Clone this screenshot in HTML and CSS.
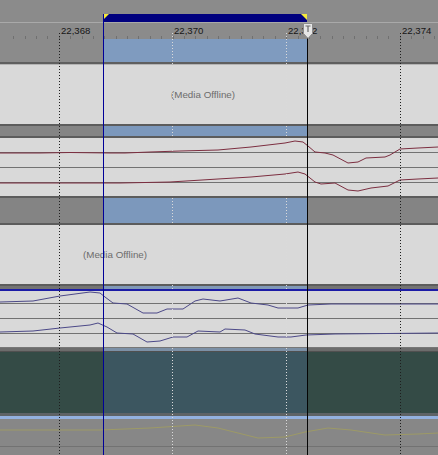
FILE: index.html
```html
<!DOCTYPE html>
<html>
<head>
<meta charset="utf-8">
<link rel="stylesheet" href="styles.css">
</head>
<body>
<div class="timeline">
  <div class="loopbar">
    <div class="loop"><span class="tri tri-l"></span><span class="tri tri-r"></span></div>
  </div>
  <div class="ruler">
    <span class="lbl">22,368</span>
    <span class="lbl">22,370</span>
    <span class="lbl">22,372</span>
    <span class="lbl">22,374</span>
  </div>
  <div class="ruler-sel"></div>
  <div class="sep"></div>
  <div class="track media"><span class="offline off1">(Media Offline)</span></div>
  <div class="band band1"></div>
  <div class="track env">
    <svg width="438" height="58" viewBox="0 0 438 58">
      <path class="grid" d="M0 14.5H438M0 29.5H438M0 44.5H438"/>
      <path class="red" d="M0,15 L40,15 L70,14.5 L110,15 L125,15 L150,14 L180,13 L218,12 L251,9 L285,5 L295,3 L303,4 L308,8 L315,14 L325,15 L333,17 L348,25 L358,24 L366,20 L385,19 L390,17 L400,11 L418,10 L438,9"/>
      <path class="red" d="M0,45 L60,45 L120,45 L170,44 L218,41 L251,39 L285,36 L298,34 L305,36 L315,44 L321,46 L335,45 L348,52 L358,53 L371,50 L388,48 L400,42 L418,41 L438,40"/>
    </svg>
  </div>
  <div class="band band2"></div>
  <div class="track media"><span class="offline off2">(Media Offline)</span></div>
  <div class="band band3"></div>
  <div class="track wave">
    <svg width="438" height="56" viewBox="0 0 438 56">
      <path class="grid" d="M0 12.5H438M0 27.5H438M0 42.5H438"/>
      <path class="blue" d="M0,11 L33,10 L60,5 L90,1 L100,2 L105,6 L113,12 L127,13 L143,22 L157,22 L167,18 L183,18 L195,10 L203,8 L220,10 L238,7 L251,12 L268,14 L278,17 L298,17 L308,14 L331,13 L438,13"/>
      <path class="blue" d="M0,41 L33,40 L60,37 L90,34 L98,32 L107,36 L117,42 L133,43 L147,51 L160,50 L173,46 L187,46 L198,40 L220,41 L225,38 L245,39 L255,43 L278,46 L291,46 L306,44 L335,43 L438,42"/>
    </svg>
  </div>
  <div class="band band4"></div>
  <div class="track teal"></div>
  <div class="band band5"></div>
  <div class="track bottom">
    <svg width="438" height="36" viewBox="0 0 438 36">
      <path class="grid" d="M0 27.5H438"/>
      <path class="olive" d="M0,11 L100,11 L150,9 L195,6 L218,9 L258,19 L285,18 L305,13 L328,9 L351,11 L385,16 L418,15 L438,14"/>
    </svg>
  </div>

  <div class="overlay">
    <div class="vline dot-dark d1"></div>
    <div class="vline dot-light d2"></div>
    <div class="vline dot-light d3"></div>
    <div class="vline dot-dark d4"></div>
    <div class="vline cursor-blue"></div>
    <div class="vline cursor-black"></div>
    <svg class="marker" width="12" height="17" viewBox="0 0 12 17">
      <path d="M1.5,0.5 H10.5 V10.5 L6,15.5 L1.5,10.5 Z" fill="#e6e6e6" stroke="#8a8a8a"/>
      <path d="M3.5,3 H8.5 M6,3 V9" stroke="#6a6a6a" stroke-width="1.2" fill="none"/>
    </svg>
  </div>
</div>
</body>
</html>
```

FILE: styles.css
```css
html, body {
  margin: 0;
  padding: 0;
  background: #8a8a8a;
}
.timeline {
  position: relative;
  width: 438px;
  height: 455px;
  overflow: hidden;
  display: flex;
  flex-direction: column;
  font-family: "Liberation Sans", Arial, sans-serif;
}
.loopbar {
  height: 22px;
  flex: none;
  background: #8b8b8b;
  display: flex;
  align-items: flex-end;
}
.loop {
  position: relative;
  margin-left: 103px;
  width: 204px;
  height: 8px;
  background: #00007e;
}
.tri {
  position: absolute;
  top: 0;
  width: 0;
  height: 0;
}
.tri-l {
  left: 0;
  border-top: 6px solid #f4e83a;
  border-right: 6px solid transparent;
}
.tri-r {
  right: 0;
  border-top: 6px solid #f4e83a;
  border-left: 6px solid transparent;
}
.ruler {
  position: relative;
  height: 16px;
  flex: none;
  border-top: 1px solid #a9a9a9;
  background:
    repeating-linear-gradient(to right, transparent 0, transparent 10.367px, #707070 10.367px, #707070 11.367px) 3px 13px / 438px 3px no-repeat,
    #8b8b8b;
  display: flex;
}
.lbl {
  position: absolute;
  top: 3px;
  font-size: 9.6px;
  line-height: 10px;
  color: #161616;
}
.lbl:nth-child(1) { left: 61px; }
.lbl:nth-child(2) { left: 174px; }
.lbl:nth-child(3) { left: 288px; }
.lbl:nth-child(4) { left: 402px; }
.ruler-sel {
  height: 23px;
  flex: none;
  background: linear-gradient(to right, #8b8b8b 103px, #7f9bbf 103px, #7f9bbf 307px, #8b8b8b 307px);
}
.sep {
  height: 3px;
  flex: none;
  border-top: 2px solid #5f5f5f;
  box-sizing: border-box;
  background: #b4b4b4;
}
.track {
  flex: none;
  position: relative;
}
.track svg { display: block; }
.media {
  height: 59px;
  background: #d9d9d9;
}
.offline {
  position: absolute;
  font-size: 9.8px;
  color: #6c6c6c;
  line-height: 10px;
}
.off1 { left: 171px; top: 25px; }
.off2 { left: 83px; top: 25px; }
.band {
  flex: none;
  box-sizing: border-box;
  background: linear-gradient(to right, #848484 103px, #7c98bc 103px, #7c98bc 307px, #848484 307px);
}
.band1 {
  height: 14px;
  border-top: 2px solid #5c5c5c;
  border-bottom: 2px solid #5c5c5c;
}
.band2 {
  height: 29px;
  border-top: 2px solid #5c5c5c;
  border-bottom: 2px solid #5c5c5c;
}
.band3 {
  height: 7px;
  border-top: 2px solid #5c5c5c;
  border-bottom: 2px solid #1c1ca6;
  background: linear-gradient(to right, #737373 103px, #8099b8 103px, #8099b8 307px, #737373 307px);
}
.band4 {
  height: 5px;
  border-top: 1px solid #777;
  border-bottom: 1px solid #505050;
  background: linear-gradient(to right, #6c6c6c 103px, #7c90a6 103px, #7c90a6 307px, #6c6c6c 307px);
}
.band5 {
  height: 6px;
  border-top: 3px solid #5e6366;
  background: #93b1df;
}
.env {
  height: 58px;
  background: #d9d9d9;
}
.wave {
  height: 56px;
  background: #d9d9d9;
}
.teal {
  height: 61px;
  background: linear-gradient(to right, #344b46 103px, #3c5660 103px, #3c5660 307px, #344b46 307px);
}
.bottom {
  height: 36px;
  background: #878787;
}
.grid {
  stroke: #727272;
  stroke-width: 1;
  fill: none;
}
.red {
  stroke: #7c2e40;
  stroke-width: 1;
  fill: none;
}
.blue {
  stroke: #4c4988;
  stroke-width: 1;
  fill: none;
}
.olive {
  stroke: #9d9a66;
  stroke-width: 1;
  fill: none;
}
.overlay {
  position: absolute;
  inset: 0;
  pointer-events: none;
}
.vline {
  position: absolute;
  width: 1px;
  bottom: 0;
}
.dot-dark {
  top: 33px;
  background: repeating-linear-gradient(to bottom, #1e1e1e 0, #1e1e1e 1px, transparent 1px, transparent 3px);
}
.dot-light {
  top: 33px;
  background: repeating-linear-gradient(to bottom, #dadada 0, #dadada 1px, transparent 1px, transparent 3px);
}
.d1 { left: 59px; }
.d2 { left: 172px; }
.d3 { left: 286px; }
.d4 { left: 400px; }
.cursor-blue {
  left: 103px;
  top: 14px;
  background: #000098;
}
.cursor-black {
  left: 307px;
  top: 30px;
  background: #050505;
}
.marker {
  position: absolute;
  left: 302px;
  top: 23px;
}
```
